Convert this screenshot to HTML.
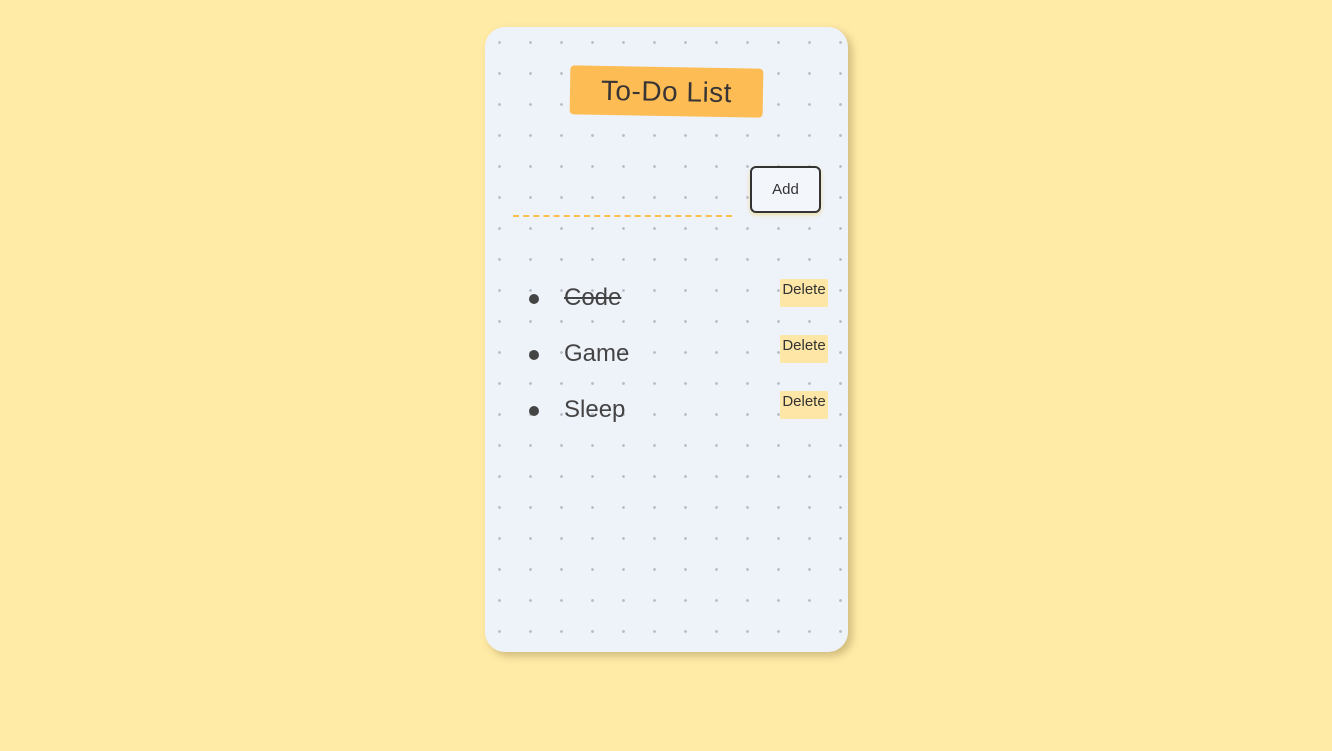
<!DOCTYPE html>
<html><head><style>
html,body{margin:0;width:1332px;height:751px;background:#ffeaa6;overflow:hidden;font-family:"Liberation Sans",sans-serif;}
.card{position:absolute;left:485px;top:27px;width:363px;height:625px;border-radius:20px;background-color:#eef3fa;
background-image:radial-gradient(circle,#b9bcc4 1.2px,transparent 1.6px);background-size:31px 31px;background-position:-1px 0px;
box-shadow:4px 4px 8px rgba(120,100,50,.35);}
.title{position:absolute;left:570px;top:67px;width:193px;height:49px;background:#fdbd54;transform:rotate(1deg);border-radius:4px;
color:#3a3535;font-size:28px;text-align:center;line-height:49px;letter-spacing:0.5px}
.add{position:absolute;left:750px;top:166px;width:67px;height:43px;border:2px solid #333;border-radius:6px;background:#f3f6fb;
font-size:15px;color:#333;text-align:center;line-height:43px;box-shadow:0 2px 4px rgba(240,200,80,.5)}
.line{position:absolute;left:513px;top:215px;width:219px;border-top:2px dashed #fbbf4c}
.item{position:absolute;left:529px;font-size:24px;color:#444;}
.item b{display:inline-block;width:10px;height:10px;border-radius:50%;background:#444;margin-right:25px;vertical-align:middle}
.del{position:absolute;left:780px;width:48px;height:28px;background:#fde6a6;font-size:15px;color:#333;line-height:22px;text-align:center}
</style></head><body>
<div class="card"></div>
<div class="title">To-Do List</div>
<div class="add">Add</div>
<div class="line"></div>
<div class="item" style="top:284px"><b></b><span style="text-decoration:line-through">Code</span></div>
<div class="item" style="top:340px"><b></b>Game</div>
<div class="item" style="top:396px"><b></b>Sleep</div>
<div class="del" style="top:279px">Delete</div>
<div class="del" style="top:335px">Delete</div>
<div class="del" style="top:391px">Delete</div>
</body></html>
